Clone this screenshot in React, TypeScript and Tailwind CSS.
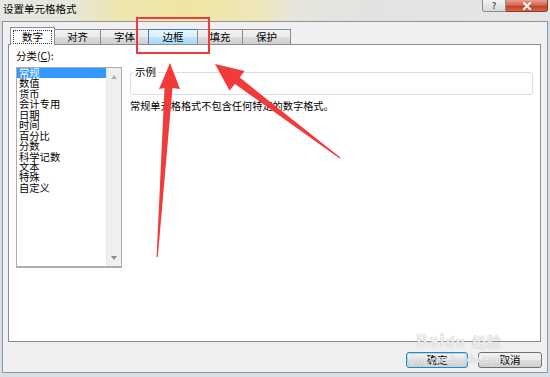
import React from "react";

const FONT = '"Noto Sans CJK SC", "Noto Sans", "Liberation Sans", sans-serif';

const categories = ["常规", "数值", "货币", "会计专用", "日期", "时间", "百分比", "分数", "科学记数", "文本", "特殊", "自定义"];

function Tab({ label, w, selected, hover }: { label: string; w: number; selected?: boolean; hover?: boolean }) {
  if (selected) {
    return (
      <div
        className="relative z-10 -mb-px h-[18px] border border-b-0 border-[#898c95] bg-white flex items-center justify-center px-[2px]"
        style={{ width: w }}
      >
        <div className="w-full h-[14px] border border-dotted border-[#333] flex items-center justify-center text-[10.5px] leading-[12px] text-black">
          {label}
        </div>
      </div>
    );
  }
  return (
    <div
      className={
        "-ml-px h-[15px] border border-b-0 flex items-center justify-center text-[10.5px] leading-[12px] text-black " +
        (hover
          ? "border-[#3c7fb1] bg-[linear-gradient(#eaf6fd,#d9f0fc_50%,#bee6fd_51%,#a7d9f5)]"
          : "border-[#898c95] bg-[linear-gradient(#f2f2f2,#ebebeb_50%,#dddddd_51%,#cfcfcf)]")
      }
      style={{ width: w }}
    >
      {label}
    </div>
  );
}

export default function App() {
  return (
    <div
      className="relative w-[550px] h-[377px] overflow-hidden bg-[#d6dee8]"
      style={{ fontFamily: FONT }}
    >
      {/* Title bar */}
      <div className="flex h-[21px] items-start bg-[linear-gradient(90deg,#e6e7e4_0%,#e8e7dc_12%,#eee5ad_22%,#efe6a4_35%,#eee7b8_47%,#e6e5dc_53%,#e2e3e2_70%,#e5e5e5_100%)]">
        <div className="pl-[3px] pt-[2px] text-[10.5px] leading-[14px] text-black">设置单元格格式</div>
        <div className="ml-auto mr-[2px] flex">
          <div className="w-[24px] h-[12px] rounded-bl-[3px] border border-t-0 border-[#8c8c8c] bg-[linear-gradient(#f4f4f4,#d9d9d9)] flex items-center justify-center text-[9px] leading-[10px] text-[#666] font-bold">
            ?
          </div>
          <div className="w-[42px] h-[12px] rounded-br-[3px] border border-t-0 border-l-0 border-[#8a3a2c] bg-[linear-gradient(#e7a08f,#d0604a_50%,#c23b22_55%,#d66a4c)] flex items-center justify-center">
            <svg width="10" height="8" viewBox="0 0 10 8">
              <path d="M2 1 L8 7 M8 1 L2 7" stroke="#fff" strokeWidth="2" strokeLinecap="square" />
            </svg>
          </div>
        </div>
      </div>

      {/* Client area */}
      <div className="mx-[2px] h-[352px] border border-[#8e959d] bg-[#f0f0f0] flex flex-col pl-[5px] pr-[5px] pt-[5px]">
        {/* Tabs */}
        <div className="flex items-end h-[17px] pl-[2px]">
          <Tab label="数字" w={45} selected />
          <Tab label="对齐" w={47} />
          <Tab label="字体" w={49} />
          <Tab label="边框" w={50} hover />
          <Tab label="填充" w={46} />
          <Tab label="保护" w={49} />
        </div>

        {/* Panel */}
        <div className="h-[298px] w-[533px] border border-[#898c95] bg-white flex items-start pl-[7px] pt-[4px]">
          {/* Left: category list */}
          <div className="flex flex-col w-[106px]">
            <div className="h-[18px] text-[10.5px] leading-[14px] text-black">
              分类(<span className="underline">C</span>):
            </div>
            <div className="h-[201px] border border-[#abadb3] border-b-2 flex">
              <div className="flex-1 flex flex-col">
                {categories.map((c, i) => (
                  <div
                    key={c}
                    className={
                      "h-[10.45px] pl-[2px] text-[10.3px] leading-[10.45px] whitespace-nowrap " +
                      (i === 0 ? "bg-[#3399ff] text-white" : "text-black")
                    }
                  >
                    {c}
                  </div>
                ))}
              </div>
              <div className="w-[15px] bg-[#f0f0f0] border-l border-[#e6e6e6] flex flex-col items-center justify-between pt-[7px] pb-[6px]">
                <svg width="6" height="4" viewBox="0 0 6 4">
                  <path d="M0 4 L3 0 L6 4 Z" fill="#b0b0b0" />
                </svg>
                <svg width="6" height="4" viewBox="0 0 6 4">
                  <path d="M0 0 L6 0 L3 4 Z" fill="#8a8a8a" />
                </svg>
              </div>
            </div>
          </div>

          {/* Right: sample and description */}
          <div className="ml-[8px] w-[403px] flex flex-col">
            <div className="relative mt-[23px] h-[23px] rounded-[3px] border border-[#d5dfe5]">
              <div className="absolute left-[2px] top-[-8px] bg-white px-[2px] text-[10.5px] leading-[14px] text-black">
                示例
              </div>
            </div>
            <div className="mt-[4px] text-[10.2px] leading-[14px] text-black whitespace-nowrap">
              常规单元格格式不包含任何特定的数字格式。
            </div>
          </div>
        </div>

        {/* Buttons */}
        <div className="mt-[10px] flex justify-end gap-[10px]">
          <div className="w-[62px] h-[16px] rounded-[3px] border border-[#3c7fb1] shadow-[inset_0_0_0_1px_#a8dcf6] bg-[linear-gradient(#f2f2f2,#ebebeb_50%,#dddddd_51%,#cfcfcf)] flex items-center justify-center text-[10.5px] leading-[12px] text-black">
            确定
          </div>
          <div className="w-[64px] h-[16px] rounded-[3px] border border-[#707070] bg-[linear-gradient(#f2f2f2,#ebebeb_50%,#dddddd_51%,#cfcfcf)] flex items-center justify-center text-[10.5px] leading-[12px] text-black">
            取消
          </div>
        </div>
      </div>

      {/* Annotation: red highlight box */}
      <div className="absolute left-[136px] top-[17px] w-[74px] h-[37px] border-2 border-[#ef3b3e]" />

      {/* Annotation: arrows */}
      <svg className="absolute left-0 top-0" width="550" height="377" viewBox="0 0 550 377">
        <polygon
          points="170,63 180,89 172.5,88 157.8,257 156.6,257 164.5,88 159,89"
          fill="#f23a3a"
        />
        <polygon
          points="215,64 244.5,71 239.8,77.6 340.3,157.6 339.7,158.4 235,84 229.5,90.5"
          fill="#f23a3a"
        />
      </svg>

      {/* Watermark */}
      <div className="absolute left-[416px] top-[330px] text-[17px] leading-[20px] font-bold text-white/80 [text-shadow:0_0_1px_#9aa0a6] tracking-[1px]">
        Bai<span className="text-[14px]">du</span>
        <span className="ml-[6px] text-[14px]">经验</span>
      </div>
      <div className="absolute left-[410px] top-[351px] text-[11px] leading-[14px] text-white/80 [text-shadow:0_0_1px_#9aa0a6]">
        jingyan.baidu.com
      </div>
    </div>
  );
}
